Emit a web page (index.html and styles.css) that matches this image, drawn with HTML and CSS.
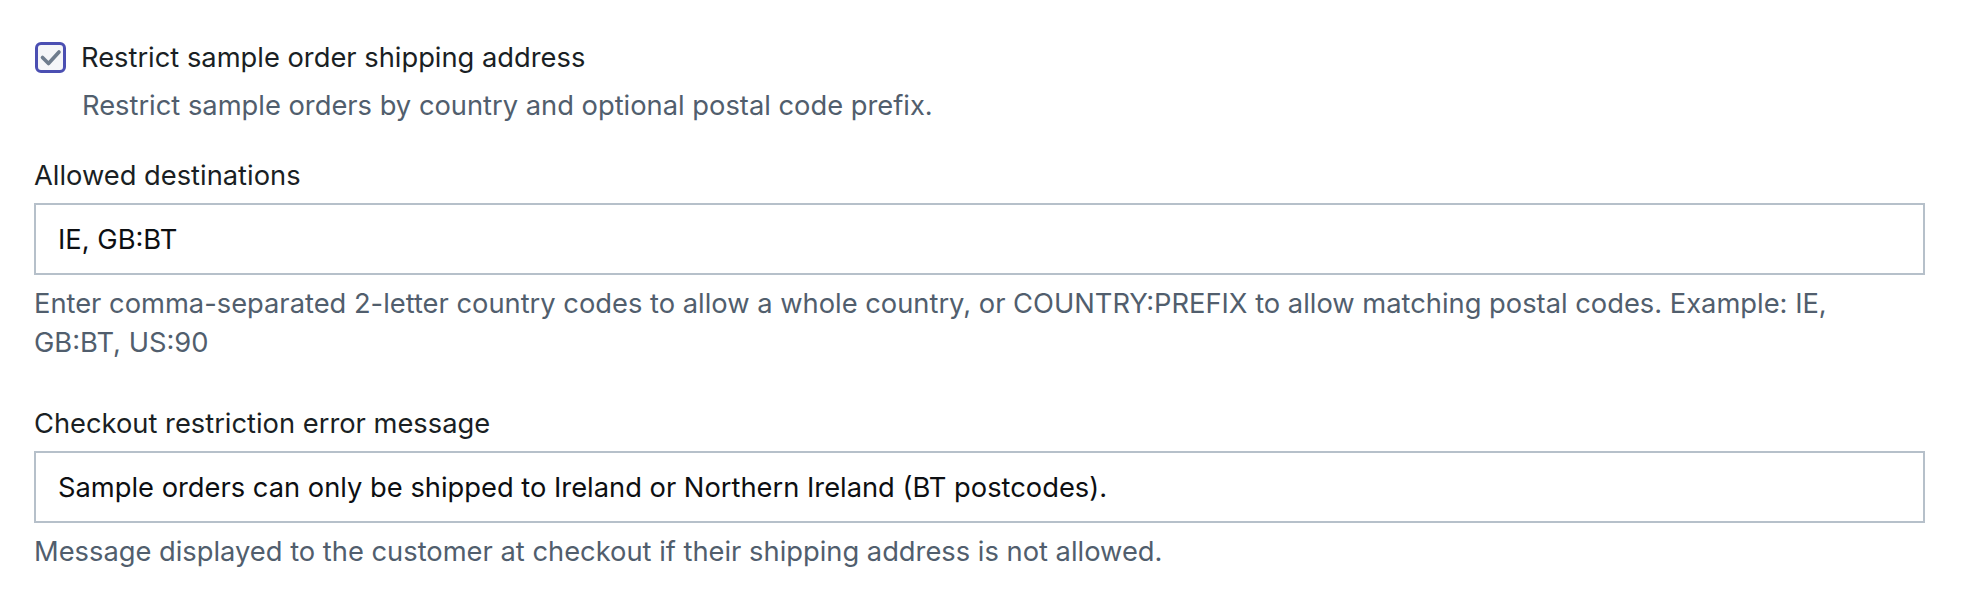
FILE: index.html
```html
<!DOCTYPE html>
<html lang="en">

<head>
    <meta charset="UTF-8">
    <meta name="viewport" content="width=device-width, initial-scale=1.0">
    <title>Sample order restrictions</title>
    <link rel="stylesheet" href="styles.css">
</head>

<body>
    <div class="settings">
        <!-- Enable toggle -->
        <div class="setting-toggle">
            <label class="checkbox-container">
                <span class="checkbox">
                    <svg viewBox="0 0 25 25" width="25" height="25">
                        <path d="M4.5 12.5l6 6L21 7" fill="none" stroke="#6e7c8c" stroke-width="3.6" stroke-linecap="round" stroke-linejoin="round"/>
                    </svg>
                </span>
                Restrict sample order shipping address
            </label>
            <div class="toggle-desc">Restrict sample orders by country and optional postal code prefix.</div>
        </div>

        <div class="field">
            <label class="field-label" for="allowedDestinations">Allowed destinations</label>
            <input type="text" id="allowedDestinations" class="text-input" value="IE, GB:BT">
            <div class="help">Enter comma-separated 2-letter country codes to allow a whole country, or COUNTRY:PREFIX to allow matching postal codes. Example: IE, GB:BT, US:90</div>
        </div>

        <div class="field">
            <label class="field-label" for="errorMessage">Checkout restriction error message</label>
            <input type="text" id="errorMessage" class="text-input" value="Sample orders can only be shipped to Ireland or Northern Ireland (BT postcodes).">
            <div class="help">Message displayed to the customer at checkout if their shipping address is not allowed.</div>
        </div>
    </div>
</body>

</html>
```

FILE: styles.css
```css
body {
    margin: 0;
    background: #ffffff;
    font-family: Inter, "Noto Sans", sans-serif;
    font-size: 27.3px;
    line-height: 39px;
    color: #1a1f24;
}

.settings {
    padding: 38px 39px 0 34px;
}

.setting-toggle {
    margin-bottom: 31px;
}

.checkbox-container {
    display: flex;
    align-items: center;
    gap: 15px;
    cursor: pointer;
    user-select: none;
}

.checkbox {
    width: 31px;
    height: 31px;
    box-sizing: border-box;
    margin-left: 1px;
    border: 3px solid #4b4fb2;
    border-radius: 6px;
    background: #f5f6f8;
    display: flex;
    align-items: center;
    justify-content: center;
}

.toggle-desc {
    margin-top: 9px;
    padding-left: 48px;
    color: #515e6d;
}

.field {
    margin-bottom: 42px;
}

.field-label {
    display: block;
    margin-bottom: 8px;
}

.text-input {
    display: block;
    width: 100%;
    height: 72px;
    box-sizing: border-box;
    margin: 0;
    padding: 0 22px;
    border: 2px solid #b6c0ca;
    border-radius: 0;
    font-family: inherit;
    font-size: 27.3px;
    color: #0d0f12;
    background: #ffffff;
    outline: none;
}

.help {
    margin-top: 9px;
    padding-right: 60px;
    color: #515e6d;
}
```
